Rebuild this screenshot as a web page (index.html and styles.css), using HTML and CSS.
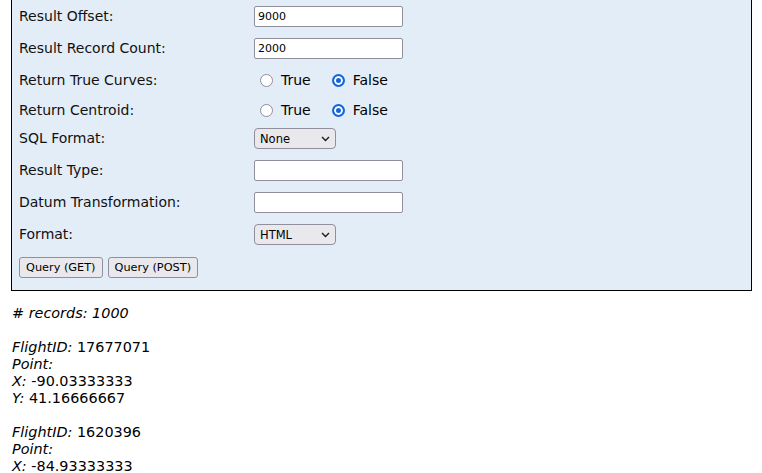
FILE: index.html
```html
<!DOCTYPE html>
<html>
<head>
<meta charset="utf-8">
<title>Query</title>
<link rel="stylesheet" href="styles.css">
</head>
<body>
<form class="query-box">
  <div class="fields">
    <label class="lbl">Result Offset:</label>
    <div class="ctl"><input class="txt" type="text" value="9000"></div>

    <label class="lbl">Result Record Count:</label>
    <div class="ctl"><input class="txt" type="text" value="2000"></div>

    <label class="lbl">Return True Curves:</label>
    <div class="ctl radios">
      <label class="opt"><input class="rad" type="radio" name="curves"> True</label>
      <label class="opt"><input class="rad" type="radio" name="curves" checked> False</label>
    </div>

    <label class="lbl">Return Centroid:</label>
    <div class="ctl radios">
      <label class="opt"><input class="rad" type="radio" name="centroid"> True</label>
      <label class="opt"><input class="rad" type="radio" name="centroid" checked> False</label>
    </div>

    <label class="lbl">SQL Format:</label>
    <div class="ctl">
      <span class="sel-wrap">
        <select class="sel"><option>None</option><option>Standard</option><option>Native</option></select>
        <svg class="chev" width="9" height="6" viewBox="0 0 9 6"><path d="M1 1 L4.5 4.5 L8 1" fill="none" stroke="#1b1b1b" stroke-width="1.4"/></svg>
      </span>
    </div>

    <label class="lbl">Result Type:</label>
    <div class="ctl"><input class="txt" type="text" value=""></div>

    <label class="lbl">Datum Transformation:</label>
    <div class="ctl"><input class="txt" type="text" value=""></div>

    <label class="lbl">Format:</label>
    <div class="ctl">
      <span class="sel-wrap">
        <select class="sel"><option>HTML</option><option>JSON</option><option>GeoJSON</option><option>PBF</option></select>
        <svg class="chev" width="9" height="6" viewBox="0 0 9 6"><path d="M1 1 L4.5 4.5 L8 1" fill="none" stroke="#1b1b1b" stroke-width="1.4"/></svg>
      </span>
    </div>

    <div class="actions">
      <button type="button" class="btn">Query (GET)</button>
      <button type="button" class="btn">Query (POST)</button>
    </div>
  </div>
</form>

<div class="results">
  <p class="count"><i># records: 1000</i></p>

  <p class="record">
    <i>FlightID:</i> 17677071<br>
    <i>Point:</i><br>
    <i>X:</i> -90.03333333<br>
    <i>Y:</i> 41.16666667
  </p>

  <p class="record">
    <i>FlightID:</i> 1620396<br>
    <i>Point:</i><br>
    <i>X:</i> -84.93333333<br>
    <i>Y:</i> 41.36666667
  </p>
</div>
</body>
</html>
```

FILE: styles.css
```css
html, body {
  margin: 0;
  padding: 0;
  background: #fff;
  color: #000;
  font-family: "DejaVu Sans", Verdana, sans-serif;
  font-size: 14px;
}

.query-box {
  box-sizing: border-box;
  width: 741px;
  margin: 0 0 0 11px;
  padding: 0 7px 8px 7px;
  background: #e3edf7;
  border: 1px solid #000;
  border-top: none;
}

.fields {
  display: grid;
  grid-template-columns: 235px 1fr;
  grid-template-rows: 33px 31px 32px 28px 29px 35px 29px 35px 30px;
  align-items: center;
}

.lbl {
  font-size: 14px;
  line-height: 17px;
  color: #111;
}

.ctl {
  display: flex;
  align-items: center;
}

/* text boxes */
.txt {
  box-sizing: border-box;
  width: 149px;
  height: 21px;
  margin: 0;
  padding: 1px 3px;
  font-family: "DejaVu Sans", Verdana, sans-serif;
  font-size: 11px;
  color: #000;
  background: #fff;
  border: 1px solid #8f8f9d;
  border-radius: 2px;
  outline: none;
}

/* radio groups */
.radios {
  font-size: 14px;
}

.opt {
  display: inline-flex;
  align-items: center;
  margin-right: 15px;
}

.rad {
  appearance: none;
  -webkit-appearance: none;
  box-sizing: border-box;
  width: 13px;
  height: 13px;
  margin: 0 8px 0 6px;
  border: 1.5px solid #8f8f9d;
  border-radius: 50%;
  background: #fff;
}

.rad:checked {
  border: 2px solid #1466d8;
  background: #1466d8;
  box-shadow: inset 0 0 0 2px #fff;
}

/* drop-downs */
.sel-wrap {
  position: relative;
  display: inline-block;
  width: 82px;
  height: 21px;
}

.sel {
  appearance: none;
  -webkit-appearance: none;
  box-sizing: border-box;
  width: 82px;
  height: 21px;
  margin: 0;
  padding: 0 0 0 5px;
  font-family: "DejaVu Sans", Verdana, sans-serif;
  font-size: 11.5px;
  color: #000;
  background: #e9e9ed;
  border: 1px solid #8f8f9d;
  border-radius: 4px;
}

.chev {
  position: absolute;
  right: 6px;
  top: 8px;
  pointer-events: none;
}

/* submit buttons */
.actions {
  grid-column: 1 / span 2;
  display: flex;
  gap: 5px;
}

.btn {
  box-sizing: border-box;
  height: 21px;
  margin: 0;
  padding: 0 6px;
  font-family: "DejaVu Sans", Verdana, sans-serif;
  font-size: 11.3px;
  color: #000;
  background: #e9e9ed;
  border: 1px solid #8f8f9d;
  border-radius: 3px;
}

/* query output */
.results {
  padding: 0 12px;
  font-size: 14.4px;
  line-height: 17px;
}

.results p {
  margin: 17px 0 0 0;
}

.results .count {
  margin-top: 14px;
}
```
